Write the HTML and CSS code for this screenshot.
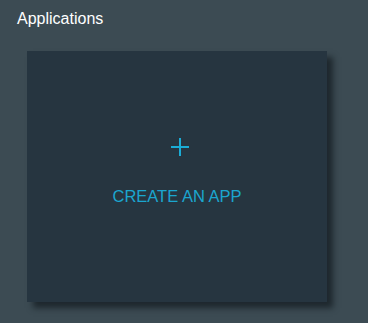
FILE: index.html
```html
<!DOCTYPE html>
<html>
<head>
<meta charset="utf-8">
<link rel="stylesheet" href="styles.css">
</head>
<body>
<div class="page">
  <h1 class="title">Applications</h1>
  <div class="card">
    <svg class="plus" width="18" height="18" viewBox="0 0 18 18"><path d="M9 0V18M0 9H18" stroke="#1bacd6" stroke-width="2" fill="none"/></svg>
    <div class="label">CREATE AN APP</div>
  </div>
</div>
</body>
</html>
```
FILE: styles.css
```css
html, body {
  margin: 0;
  padding: 0;
  background: #3c4b53;
}
.page {
  width: 368px;
  height: 323px;
  box-sizing: border-box;
  padding: 9px 0 0 17px;
  font-family: "Liberation Sans", Arial, sans-serif;
}
.title {
  margin: 0;
  font-size: 16px;
  font-weight: normal;
  color: #ffffff;
  line-height: 19px;
}
.card {
  margin: 23px 0 0 10px;
  width: 300px;
  height: 251px;
  background: #263540;
  box-shadow: 6px 6px 6px rgba(20, 28, 34, 0.75);
  display: flex;
  flex-direction: column;
  align-items: center;
  padding-top: 87px;
  box-sizing: border-box;
}
.plus {
  display: block;
  margin-left: 5px;
}
.label {
  margin-top: 31px;
  font-size: 16.5px;
  color: #1ba6cf;
  line-height: 19px;
}
```
